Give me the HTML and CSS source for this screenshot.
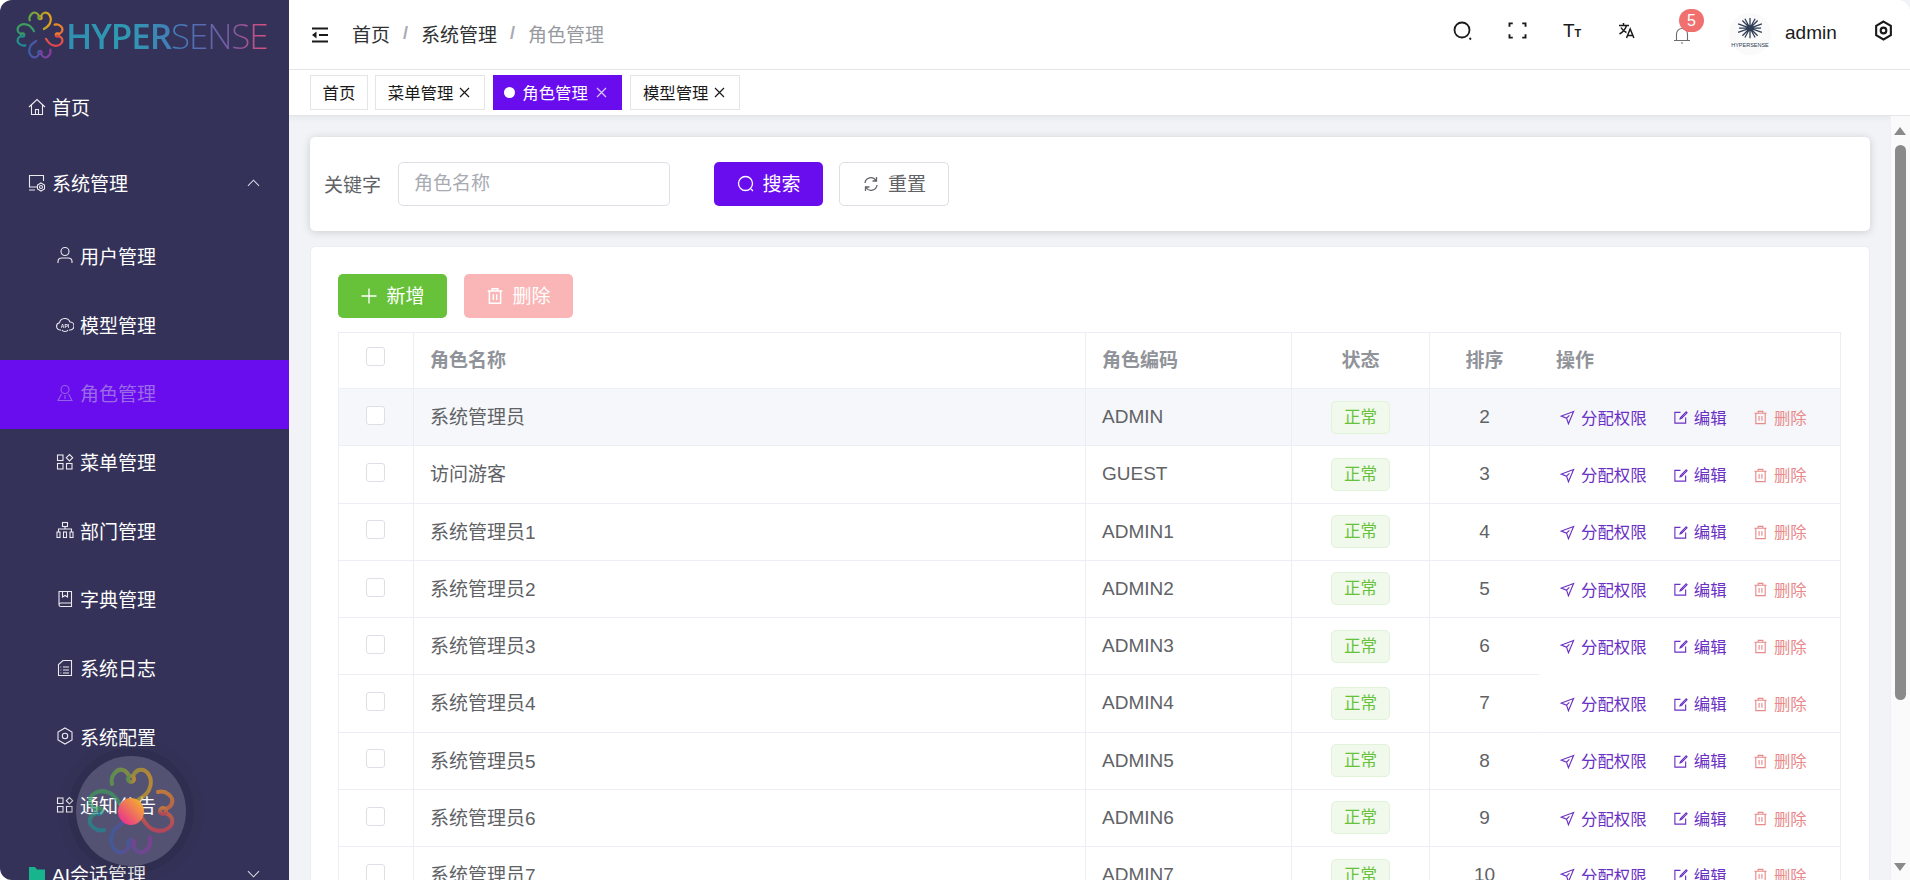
FILE: index.html
```html
<!DOCTYPE html>
<html lang="zh">
<head>
    <meta charset="UTF-8">
    <meta name="viewport" content="width=device-width, initial-scale=1.0">
    <title>角色管理</title>
    <link rel="stylesheet" href="styles.css">
</head>
<body>

    <!-- 共用圖示 -->
    <svg class="defs" width="0" height="0">
        <defs>
            <linearGradient id="petalA"><stop offset="0" stop-color="#5fa845"/><stop offset="1" stop-color="#e5a01a"/></linearGradient>
            <linearGradient id="petalB"><stop offset="0" stop-color="#ef8a26"/><stop offset="1" stop-color="#e0414f"/></linearGradient>
            <linearGradient id="petalC"><stop offset="0" stop-color="#8c3aa0"/><stop offset="1" stop-color="#3b5ea8"/></linearGradient>
            <linearGradient id="petalD"><stop offset="0" stop-color="#1c8c98"/><stop offset="1" stop-color="#3f9e58"/></linearGradient>
            <path id="petal" d="M-19 -27C-21 -35 -14 -43 -8 -41C-4 -40 -3 -37 -2 -35M2 -35C3 -37 4 -40 8 -41C16 -43 22 -33 19 -24C18 -18 12 -14 7 -11"/>
            <symbol id="flower" viewBox="-46 -46 92 92">
                <g fill="none" stroke-width="4" stroke-linecap="round">
                    <g stroke="url(#petalA)"><use href="#petal"/><circle cx="0" cy="-32" r="3"/></g>
                    <g stroke="url(#petalB)" transform="rotate(90)"><use href="#petal"/><circle cx="0" cy="-32" r="3"/></g>
                    <g stroke="url(#petalC)" transform="rotate(180)"><use href="#petal"/><circle cx="0" cy="-32" r="3"/></g>
                    <g stroke="url(#petalD)" transform="rotate(270)"><use href="#petal"/><circle cx="0" cy="-32" r="3"/></g>
                </g>
            </symbol>
            <symbol id="i-grid" viewBox="0 0 18 18"><rect x="1.500" y="2" width="5.500" height="5.500"/><path d="M13.500 1.500l3.200 3.200-3.200 3.200-3.200-3.200z"/><rect x="1.500" y="10.500" width="5.500" height="5.500"/><rect x="10.500" y="10.500" width="5.500" height="5.500"/></symbol>
            <symbol id="i-send" viewBox="0 0 16 16"><path d="M14.500 1.500L1.500 6.500l5.500 2.200 2 6z"/><path d="M7 8.700l3-3"/></symbol>
            <symbol id="i-edit" viewBox="0 0 16 16"><path d="M8 2.500H2v11.500h11.500V8"/><path d="M14 2L8 8l-.5 1.500L9 9l6-6z"/></symbol>
            <symbol id="i-trash" viewBox="0 0 16 16"><path d="M1.500 3.500h13M5.500 3.500V1.500h5v2M3 3.500v11h10v-11M6.500 6.500v5M9.500 6.500v5"/></symbol>
            <symbol id="i-cross" viewBox="0 0 11 11"><path d="M1 1l9 9M10 1l-9 9"/></symbol>
        </defs>
    </svg>

    <div class="app">
        <!-- 側邊欄 -->
        <aside class="sidebar">
            <div class="logo">
                <svg class="logo-mark"><use href="#flower"/></svg>
                <span class="logo-text"><b>HYPER</b>SENSE</span>
            </div>
            <ul class="menu">
                <li class="menu-item">
                    <svg class="menu-icon" viewBox="0 0 18 18"><path d="M1 9l8-7.500L17 9M3.500 7v9.500h11V7M7.500 16.500v-5h3v5"/></svg>首页
                </li>
                <li class="menu-item">
                    <svg class="menu-icon" viewBox="0 0 18 18"><path d="M9 13H1.500V1.500h14V7M1 16h6"/><circle cx="13" cy="13" r="1.500"/><path d="M13 9l3.500 2v4L13 17l-3.500-2v-4z"/></svg>系统管理
                    <svg class="chevron" viewBox="0 0 14 8"><path d="M1 7l6-6 6 6"/></svg>
                </li>
                <li class="menu-item sub">
                    <svg class="menu-icon" viewBox="0 0 18 18"><circle cx="9" cy="5.500" r="4"/><path d="M2 17v-1.500C2 13 4 12 6 12h6c2 0 4 1 4 3.500V17"/></svg>用户管理
                </li>
                <li class="menu-item sub">
                    <svg class="menu-icon" viewBox="0 0 18 18"><path d="M5 15H4a3.700 3.700 0 0 1-.5-7.300A5.500 5.500 0 0 1 14 7a3.900 3.900 0 0 1 0 8h-1M6 15c1 2 5 2 6 0"/><text class="api" x="9" y="12.500">API</text></svg>模型管理
                </li>
                <li class="menu-item sub active">
                    <svg class="menu-icon" viewBox="0 0 18 18"><circle cx="9" cy="5.500" r="4"/><path d="M5.500 10L2 16.500h14L12.500 10M9 11v4"/></svg>角色管理
                </li>
                <li class="menu-item sub">
                    <svg class="menu-icon"><use href="#i-grid"/></svg>菜单管理
                </li>
                <li class="menu-item sub">
                    <svg class="menu-icon" viewBox="0 0 18 18"><rect x="6.500" y="1.500" width="5" height="4"/><path d="M9 5.500V8M2.500 11V8h13v3"/><rect x="1" y="11" width="3" height="5.500"/><rect x="7.500" y="11" width="3" height="5.500"/><rect x="14" y="11" width="3" height="5.500"/></svg>部门管理
                </li>
                <li class="menu-item sub">
                    <svg class="menu-icon" viewBox="0 0 18 18"><path d="M15.500 13V1.500H3V15M3 15c0-1.200.8-2 2-2h10.500v3.500H5c-1.200 0-2-.5-2-1.500zM6.500 1.500V7L9 5.500 11.500 7V1.500"/></svg>字典管理
                </li>
                <li class="menu-item sub">
                    <svg class="menu-icon" viewBox="0 0 18 18"><path d="M7 1.500h8.500v15h-13V5.500zM7 8h6M7 11h6M7 14h6M4.500 8h.8M4.500 11h.8M4.500 14h.8"/></svg>系统日志
                </li>
                <li class="menu-item sub">
                    <svg class="menu-icon" viewBox="0 0 18 18"><path d="M9 1l7 4v8l-7 4-7-4V5z"/><circle cx="9" cy="9" r="2.700"/></svg>系统配置
                </li>
                <li class="menu-item sub">
                    <svg class="menu-icon"><use href="#i-grid"/></svg>通知公告
                </li>
                <li class="menu-item">
                    <svg class="menu-icon folder" viewBox="0 0 18 18"><path d="M1 2h6l2 2.500h8V16H1z"/></svg>AI会话管理
                    <svg class="chevron" viewBox="0 0 14 8"><path d="M1 1l6 6 6-6"/></svg>
                </li>
            </ul>
            <div class="float-ball">
                <svg class="float-mark"><use href="#flower"/></svg>
                <span class="float-dot"></span>
            </div>
        </aside>

        <div class="main">
            <!-- 頂部列 -->
            <header class="navbar">
                <svg class="fold-icon" viewBox="0 0 18 16"><path d="M1 1.500h16M8 8h9M1 14.500h16"/><path class="solid" d="M5.500 4.500L1 8l4.500 3.500z"/></svg>
                <nav class="breadcrumb">
                    <span>首页</span><i>/</i><span>系统管理</span><i>/</i><span class="current">角色管理</span>
                </nav>
                <div class="nav-right">
                    <svg class="nav-icon search-i" viewBox="0 0 20 20"><circle cx="9" cy="9" r="7.500"/><path d="M16.500 17l1.500 1.500"/></svg>
                    <svg class="nav-icon full-i" viewBox="0 0 20 18"><path d="M1.500 5V1.500H5M15 1.500h3.500V5M1.500 13v3.500H5M15 16.500h3.500V13"/></svg>
                    <span class="text-size">T<small>T</small></span>
                    <svg class="nav-icon lang-i" viewBox="0 0 18 17"><path d="M1 3.500h10M5.500 1v2.500M8.500 3.500C7.500 7 5 10 1.500 12M3 5.500c1 2 3 4 5.500 5M8.500 16l3.700-9 3.700 9M9.700 13.500h5"/></svg>
                    <div class="bell">
                        <svg class="nav-icon" viewBox="0 0 18 17"><path d="M1 13.500h16M3.500 13.500V7a5.500 5.500 0 0 1 11 0v6.500M8 16h2"/></svg>
                        <span class="badge">5</span>
                    </div>
                    <div class="avatar">
                        <svg viewBox="0 0 40 28"><g stroke="#2f3d55" stroke-width="1.500"><path d="M20 1v24M7 13h26M11 4l18 18M29 4L11 22M14 2l12 22M26 2L14 24M6 8l28 10M34 8L6 18"/></g><circle cx="20" cy="13" r="3.500" fill="#2f3d55"/></svg>
                        <span>HYPERSENSE</span>
                    </div>
                    <span class="username">admin</span>
                    <svg class="nav-icon gear-i" viewBox="0 0 18 20"><path d="M9 1.500l7 4v9l-7 4-7-4v-9z"/><circle cx="9" cy="10" r="2.700"/></svg>
                </div>
            </header>

            <!-- 頁籤 -->
            <div class="tags">
                <span class="tag">首页</span>
                <span class="tag">菜单管理<svg><use href="#i-cross"/></svg></span>
                <span class="tag active"><u></u>角色管理<svg><use href="#i-cross"/></svg></span>
                <span class="tag">模型管理<svg><use href="#i-cross"/></svg></span>
            </div>

            <div class="page">
                <section class="card search-card">
                    <label class="field-label">关键字</label>
                    <div class="field-input">角色名称</div>
                    <button class="btn primary">
                        <svg viewBox="0 0 18 18"><circle cx="8.500" cy="8.500" r="7"/><path d="M14 14l2 2"/></svg>搜索
                    </button>
                    <button class="btn plain">
                        <svg viewBox="0 0 18 18"><path d="M3 8a6 6 0 0 1 11-2.500M15 10a6 6 0 0 1-11 2.500M14.500 2v4h-4M3.500 16v-4h4"/></svg>重置
                    </button>
                </section>

                <section class="card table-card">
                    <div class="toolbar">
                        <button class="btn success">
                            <svg viewBox="0 0 18 18"><path d="M9 1.500v15M1.500 9h15"/></svg>新增
                        </button>
                        <button class="btn danger-off">
                            <svg><use href="#i-trash"/></svg>删除
                        </button>
                    </div>
                    <table class="role-table">
                        <colgroup>
                            <col class="c-check"><col class="c-name"><col class="c-code"><col class="c-status"><col class="c-sort"><col>
                        </colgroup>
                        <thead>
                            <tr>
                                <th class="center"><span class="check"></span></th>
                                <th>角色名称</th>
                                <th>角色编码</th>
                                <th class="center">状态</th>
                                <th class="center no-right">排序</th>
                                <th>操作</th>
                            </tr>
                        </thead>
                        <tbody id="roleRows"></tbody>
                    </table>
                </section>
            </div>

            <!-- 捲軸 -->
            <div class="scrollbar">
                <span class="arrow up"></span>
                <span class="thumb"></span>
                <span class="arrow down"></span>
            </div>
        </div>
    </div>

    <script>
        const roles = [
            ["系统管理员", "ADMIN", 2],
            ["访问游客", "GUEST", 3],
            ["系统管理员1", "ADMIN1", 4],
            ["系统管理员2", "ADMIN2", 5],
            ["系统管理员3", "ADMIN3", 6],
            ["系统管理员4", "ADMIN4", 7],
            ["系统管理员5", "ADMIN5", 8],
            ["系统管理员6", "ADMIN6", 9],
            ["系统管理员7", "ADMIN7", 10]
        ];

        let rows = "";
        roles.forEach((r, i) => {
            let cls = i === 0 ? "hover" : "";
            if (i === 4) cls = "open-end";
            rows += `<tr class="${cls}">
                <td class="center"><span class="check"></span></td>
                <td class="name">${r[0]}</td>
                <td>${r[1]}</td>
                <td class="center"><span class="status">正常</span></td>
                <td class="center no-right">${r[2]}</td>
                <td class="actions">
                    <a class="act perm"><svg><use href="#i-send"/></svg>分配权限</a>
                    <a class="act edit"><svg><use href="#i-edit"/></svg>编辑</a>
                    <a class="act del"><svg><use href="#i-trash"/></svg>删除</a>
                </td>
            </tr>`;
        });
        document.getElementById("roleRows").innerHTML = rows;
    </script>

</body>
</html>
```

FILE: styles.css
```css
* {
    box-sizing: border-box;
}
html, body {
    margin: 0;
    height: 100%;
    overflow: hidden;
}
body {
    font-family: "Liberation Sans", "Noto Sans CJK SC", sans-serif;
    font-size: 19px;
    color: #606266;
    background: #fff;
}
.defs {
    position: absolute;
}
.app {
    display: flex;
    height: 880px;
}

/* 側邊欄 */
.sidebar {
    position: relative;
    width: 289px;
    flex-shrink: 0;
    height: 880px;
    overflow: hidden;
    background: #343258;
    border-radius: 12px 0 0 12px;
    color: #fff;
}
.logo {
    display: flex;
    align-items: center;
    height: 70px;
    padding-left: 15px;
}
.logo-mark {
    width: 50px;
    height: 50px;
    flex-shrink: 0;
}
.logo-text {
    margin-left: 1px;
    font-family: "Open Sans", sans-serif;
    font-size: 35px;
    font-weight: 300;
    letter-spacing: -1.100px;
    line-height: 1;
    background: linear-gradient(to right, #2f8fb0 0%, #2f9ab2 30%, #4a74b8 60%, #7a58a0 82%, #e0507c 100%);
    -webkit-background-clip: text;
    background-clip: text;
    color: transparent;
}
.logo-text b {
    font-weight: 600;
}
.menu {
    list-style: none;
    margin: 0;
    padding: 0;
}
.menu-item {
    display: flex;
    align-items: center;
    height: 68.700px;
    padding-left: 28px;
    padding-bottom: 3px;
    white-space: nowrap;
    color: #fff;
}
.menu-item:nth-child(1) {
    height: 76px;
}
.menu-item:nth-child(2) {
    height: 76.600px;
}
.menu-item.sub {
    padding-left: 56px;
}
.menu-item.active {
    background: #6a0dee;
    color: #9a6be8;
}
.menu-icon {
    width: 18px;
    height: 18px;
    margin-right: 6px;
    flex-shrink: 0;
    fill: none;
    stroke: currentColor;
    stroke-width: 1.100;
    opacity: .9;
}
.menu-icon .api {
    fill: currentColor;
    stroke: none;
    font-size: 5px;
    font-weight: 700;
    text-anchor: middle;
}
.menu-icon.folder {
    fill: #17b48e;
    stroke: none;
    opacity: 1;
}
.chevron {
    width: 13px;
    height: 8px;
    margin-left: auto;
    margin-right: 29px;
    fill: none;
    stroke: #dcdce6;
    stroke-width: 1.100;
}

/* 懸浮球 */
.float-ball {
    position: absolute;
    left: 76px;
    top: 756px;
    display: flex;
    align-items: center;
    justify-content: center;
    width: 110px;
    height: 110px;
    border-radius: 50%;
    background: rgba(255, 255, 255, .16);
    box-shadow: 0 0 0 8px rgba(30, 30, 50, .14), 0 0 0 18px rgba(30, 30, 50, .05);
}
.float-mark {
    width: 92px;
    height: 92px;
    opacity: .68;
}
.float-dot {
    position: absolute;
    left: 42px;
    top: 42px;
    width: 26px;
    height: 27px;
    border-radius: 50%;
    background: linear-gradient(to top right, #e81f9c, #f6c11f);
}

/* 主區 */
.main {
    position: relative;
    flex: 1;
    min-width: 0;
    display: flex;
    flex-direction: column;
    background: #f2f3f6;
}
.navbar {
    display: flex;
    align-items: center;
    height: 70px;
    flex-shrink: 0;
    padding-left: 22px;
    background: #fff;
    border-bottom: 1px solid #e4e5e9;
    border-radius: 0 12px 0 0;
}
.fold-icon {
    width: 18px;
    height: 16px;
    fill: none;
    stroke: #1a1a1a;
    stroke-width: 2;
}
.fold-icon .solid {
    fill: #1a1a1a;
    stroke: none;
}
.breadcrumb {
    display: flex;
    align-items: center;
    margin-left: 23px;
    padding-bottom: 2px;
    color: #303133;
}
.breadcrumb i {
    margin: 0 13px;
    font-style: normal;
    font-weight: 700;
    color: #a8abb2;
    font-size: 18px;
}
.breadcrumb .current {
    color: #97999f;
}
.nav-right {
    position: relative;
    margin-left: auto;
    height: 100%;
    width: 470px;
}
.nav-icon {
    position: absolute;
    fill: none;
    stroke: #1a1a1a;
    stroke-width: 1.800;
}
.search-i {
    left: 13px;
    top: 21px;
    width: 20px;
    height: 20px;
}
.full-i {
    left: 68px;
    top: 22px;
    width: 19px;
    height: 17px;
    stroke-width: 2;
}
.text-size {
    position: absolute;
    left: 123px;
    top: 21px;
    font-size: 19px;
    line-height: 20px;
    color: #1a1a1a;
}
.text-size small {
    font-size: 11px;
    font-weight: 700;
}
.lang-i {
    left: 178px;
    top: 22px;
    width: 18px;
    height: 17px;
    stroke-width: 1.500;
}
.bell {
    position: absolute;
    left: 233px;
    top: 0;
    width: 20px;
    height: 60px;
}
.bell .nav-icon {
    left: 0;
    top: 27px;
    width: 18px;
    height: 17px;
    stroke: #6b6d72;
    stroke-width: 1.100;
}
.badge {
    position: absolute;
    left: 6px;
    top: 9px;
    width: 25px;
    height: 23px;
    border-radius: 12px;
    background: #f07070;
    color: #fff;
    font-size: 16px;
    line-height: 23px;
    text-align: center;
}
.avatar {
    position: absolute;
    left: 289px;
    top: 13px;
    display: flex;
    flex-direction: column;
    align-items: center;
    width: 42px;
    height: 42px;
    border-radius: 50%;
    background: #fafafa;
}
.avatar svg {
    width: 34px;
    height: 26px;
    margin-top: 3px;
}
.avatar span {
    font-size: 5.500px;
    line-height: 7px;
    color: #2f3d55;
}
.username {
    position: absolute;
    left: 345px;
    top: 21px;
    color: #1a1a1a;
    line-height: 24px;
}
.gear-i {
    left: 434px;
    top: 20px;
    width: 19px;
    height: 21px;
    stroke-width: 2;
}

/* 頁籤 */
.tags {
    display: flex;
    align-items: center;
    gap: 7px;
    height: 46px;
    flex-shrink: 0;
    padding-left: 21px;
    background: #fff;
    border-bottom: 1px solid #e4e5e9;
}
.tag {
    display: flex;
    align-items: center;
    height: 35px;
    padding: 0 12px 2px;
    background: #fff;
    border: 1px solid #e4e5e9;
    font-size: 16.400px;
    color: #1a1a1a;
}
.tag:first-child {
    padding: 0 11.500px 2px;
}
.tag svg {
    width: 11px;
    height: 11px;
    flex-shrink: 0;
    margin: 2px 2px 0 6px;
    fill: none;
    stroke: currentColor;
    stroke-width: 1.200;
}
.tag.active {
    margin: 0 1px;
    background: #6a0dee;
    border-color: #6a0dee;
    color: #fff;
}
.tag.active svg {
    margin-left: 8px;
    stroke: #d9c7fb;
}
.tag u {
    flex-shrink: 0;
    width: 11px;
    height: 11px;
    margin: 2px 7px 0 -2px;
    border-radius: 50%;
    background: #fff;
}

/* 內容 */
.page {
    flex: 1;
    min-height: 0;
    overflow: hidden;
    padding: 21px 40px 0 21px;
    box-shadow: inset 0 8px 8px -8px rgba(0, 0, 0, .08);
}
.card {
    background: #fff;
    border-radius: 5px;
}
.search-card {
    display: flex;
    align-items: center;
    height: 94px;
    padding-left: 14px;
    box-shadow: 0 1px 8px rgba(0, 0, 0, .16);
}
.field-label {
    margin-right: 17px;
    padding-bottom: 2px;
}
.field-input {
    width: 272px;
    height: 44px;
    margin-right: 44px;
    padding-left: 15px;
    border: 1px solid #dcdfe6;
    border-radius: 5px;
    color: #a8abb2;
    line-height: 42px;
}
.btn {
    display: inline-flex;
    align-items: center;
    justify-content: center;
    width: 109px;
    height: 44px;
    padding: 0 0 3px;
    border: 1px solid transparent;
    border-radius: 5px;
    font: inherit;
    cursor: pointer;
}
.btn svg {
    width: 18px;
    height: 18px;
    margin-top: 3px;
    margin-right: 8px;
    fill: none;
    stroke: currentColor;
    stroke-width: 1.300;
}
.btn.primary {
    background: #6a0dee;
    color: #fff;
    margin-right: 16px;
}
.btn.plain {
    width: 110px;
    background: #fff;
    border-color: #dcdfe6;
    color: #606266;
}
.btn.success {
    background: #67c23a;
    color: #fff;
}
.btn.danger-off {
    background: #fab6b6;
    color: #fff;
}
.table-card {
    margin-top: 15px;
    padding: 27px 28px 0 27px;
    border: 1px solid #eceef2;
    height: 700px;
}
.toolbar {
    display: flex;
    gap: 17px;
    margin-bottom: 14px;
}

/* 表格 */
.role-table {
    width: 100%;
    table-layout: fixed;
    border-collapse: separate;
    border-spacing: 0;
    border-top: 1px solid #ebeef5;
    border-left: 1px solid #ebeef5;
}
.c-check { width: 75px; }
.c-name { width: 672px; }
.c-code { width: 206px; }
.c-status { width: 138px; }
.c-sort { width: 110px; }
.role-table th, .role-table td {
    height: 57.250px;
    padding: 0 16px;
    border-right: 1px solid #ebeef5;
    border-bottom: 1px solid #ebeef5;
    text-align: left;
    white-space: nowrap;
}
.role-table th {
    height: 56px;
    padding-bottom: 4px;
    font-weight: 700;
    color: #909399;
}
.role-table td.name {
    padding-bottom: 3px;
}
.role-table .center {
    text-align: center;
}
.role-table .no-right {
    border-right-color: transparent;
}
.role-table tr.hover td {
    background: #f5f7fa;
}
.role-table tr.open-end td.actions {
    border-bottom-color: transparent;
}
.check {
    display: inline-block;
    width: 19px;
    height: 19px;
    margin: 0 2px 4px 0;
    vertical-align: middle;
    border: 1px solid #dcdfe6;
    border-radius: 3px;
    background: #fff;
}
.status {
    display: inline-block;
    width: 59px;
    height: 33px;
    border: 1px solid #e1f3d8;
    border-radius: 5px;
    background: #f0f9eb;
    color: #67c23a;
    font-size: 16.500px;
    line-height: 31px;
    vertical-align: middle;
}
.role-table td.actions {
    padding: 4px 0 0 20px;
}
.act {
    display: inline-flex;
    align-items: center;
    margin-right: 21px;
    font-size: 16.400px;
    line-height: 20px;
}
.act svg {
    width: 15px;
    height: 15px;
    margin-right: 6px;
    fill: none;
    stroke: currentColor;
    stroke-width: 1.200;
}
.act.perm, .act.edit {
    color: #6a2fc4;
}
.act.del {
    color: #e88a8a;
}

/* 捲軸 */
.scrollbar {
    position: absolute;
    right: 0;
    top: 116px;
    bottom: 0;
    width: 20px;
    background: #fafafa;
    border-left: 1px solid #eef0f3;
}
.thumb {
    position: absolute;
    left: 4px;
    top: 29px;
    width: 11px;
    height: 555px;
    border-radius: 6px;
    background: #8a8a8a;
}
.arrow {
    position: absolute;
    left: 3px;
    width: 0;
    height: 0;
    border-left: 6.500px solid transparent;
    border-right: 6.500px solid transparent;
}
.arrow.up {
    top: 11px;
    border-bottom: 8px solid #8a8a8a;
}
.arrow.down {
    bottom: 9px;
    border-top: 8px solid #8a8a8a;
}
```
